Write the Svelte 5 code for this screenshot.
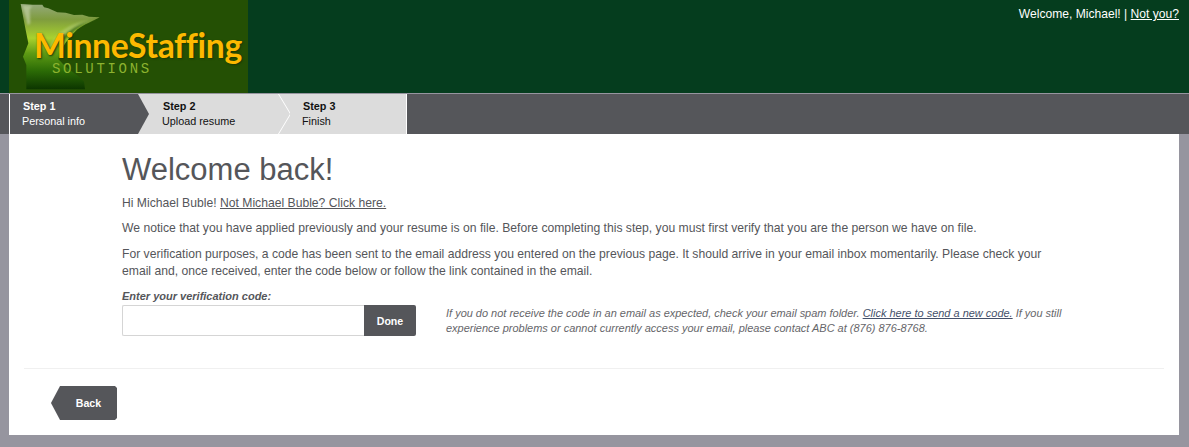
<script>
	const steps = [
		{ title: 'Step 1', label: 'Personal info', active: true },
		{ title: 'Step 2', label: 'Upload resume' },
		{ title: 'Step 3', label: 'Finish' }
	];
</script>

<div class="page">
	<header class="top">
		<div class="logo">
			<svg class="map" viewBox="0 0 717 279" width="239" height="93" aria-hidden="true">
				<defs>
					<linearGradient id="mn" x1="0" y1="0" x2="0" y2="1">
						<stop offset="0" stop-color="#94a97c" />
						<stop offset="0.18" stop-color="#7f9c3e" />
						<stop offset="0.4" stop-color="#a8d22e" />
						<stop offset="0.58" stop-color="#5d9a14" />
						<stop offset="0.78" stop-color="#2c6c06" />
						<stop offset="1" stop-color="#0c3500" />
					</linearGradient>
					<linearGradient id="dark" x1="0" y1="0" x2="0" y2="1">
						<stop offset="0" stop-color="#35660f" />
						<stop offset="1" stop-color="#1b5203" />
					</linearGradient>
					<filter id="soft" x="-10%" y="-10%" width="120%" height="120%"><feGaussianBlur stdDeviation="3" /></filter>
				</defs>
				<path fill="url(#mn)" d="M35 12 L70 14 L100 14 L105 22 L118 25 L145 37 L170 38 L195 45 L220 44 L240 50 L272 52 C240 68 215 78 198 95 C178 115 160 140 152 160 L148 178 L170 200 L210 230 L225 245 L228 268 L52 268 L52 195 L42 170 L58 130 L50 90 Z" />
				<path fill="url(#dark)" filter="url(#soft)" d="M272 52 C215 70 170 105 132 165 C155 130 150 120 165 105 C195 75 235 62 272 52 Z" opacity="0.85" />
				<path fill="#b7d07a" filter="url(#soft)" opacity="0.55" d="M150 130 C175 90 215 70 262 56 C225 62 185 72 160 92 C140 108 125 128 118 150 Z" />
				<path fill="#c9d6ae" filter="url(#soft)" opacity="0.6" d="M40 16 L70 18 L62 28 L64 70 L56 76 Z" />
			</svg>
			<div class="brand">MinneStaffing</div>
			<div class="sub">SOLUTIONS</div>
		</div>
		<div class="welcome">Welcome, Michael! | <a href="#top">Not you?</a></div>
	</header>

	<nav class="stepbar">
		<ol class="steps">
			{#each steps as s}
				<li class="step" class:active={s.active}>
					<b>{s.title}</b>
					<span>{s.label}</span>
				</li>
			{/each}
		</ol>
	</nav>

	<main class="content">
		<section class="copy">
			<h1>Welcome back!</h1>
			<p class="hi">Hi Michael Buble! <a href="#top">Not Michael Buble? Click here.</a></p>
			<p>We notice that you have applied previously and your resume is on file. Before completing this step, you must first verify that you are the person we have on file.</p>
			<p>For verification purposes, a code has been sent to the email address you entered on the previous page. It should arrive in your email inbox momentarily. Please check your email and, once received, enter the code below or follow the link contained in the email.</p>
			<div class="verify">
				<div class="field">
					<label for="code">Enter your verification code:</label>
					<div class="inputrow">
						<input id="code" type="text" />
						<button type="button">Done</button>
					</div>
				</div>
				<p class="help">If you do not receive the code in an email as expected, check your email spam folder. <a href="#top">Click here to send a new code.</a> If you still experience problems or cannot currently access your email, please contact ABC at (876) 876-8768.</p>
			</div>
		</section>
		<div class="actions">
			<button type="button" class="back">Back</button>
		</div>
	</main>
</div>

<style>
	:global(body) { margin: 0; background: #96959f; }
	.page { height: 447px; overflow: hidden; font-family: "Liberation Sans", Arial, sans-serif; font-size: 12.17px; color: #55565a; }

	.top { height: 93px; background: #053d1e; display: flex; justify-content: space-between; }
	.logo { position: relative; width: 239px; height: 93px; margin-left: 9px; background: #245004; overflow: hidden; }
	.map { position: absolute; left: 0; top: 0; }
	.brand { position: absolute; left: 25px; top: 27px; font-family: Lato, sans-serif; font-weight: 700; font-size: 33.7px; line-height: 36px; letter-spacing: -0.35px; color: #fdb900; text-shadow: 1px 1px 2px #1b3802; white-space: nowrap; }
	.sub { position: absolute; left: 43px; top: 63px; font-family: "Liberation Mono", monospace; font-size: 14px; line-height: 12px; letter-spacing: 2.7px; color: #8db32f; white-space: nowrap; }
	.welcome { padding: 7px 10px 0 0; color: #fff; font-size: 12.1px; }
	.welcome a { color: #fff; }

	.stepbar { height: 40px; margin-top: 1px; background: #55565a; padding-left: 9px; }
	.steps { list-style: none; margin: 0; padding: 0; display: flex; width: 398px; height: 40px; box-sizing: border-box; background: #dcdcdc; border-left: 1px solid #fff; border-right: 1px solid #fff; }
	.step { position: relative; width: 140px; box-sizing: border-box; padding: 5px 0 0 12px; line-height: 15px; font-size: 10.8px; color: #111; display: flex; flex-direction: column; }
	.step b { font-weight: 700; padding-left: 1px; }
	.step:last-child { width: 116px; }
	.step::after { content: ""; position: absolute; top: 0; left: 128px; width: 12px; height: 40px; background: #fff; clip-path: polygon(0 0, 100% 50%, 0 100%, 1px 100%, calc(100% + 1px) 50%, 1px 0); }
	.step:last-child::after { display: none; }
	.step.active { color: #fff; background: #55565a; clip-path: polygon(0 0, 128px 0, 139px 50%, 128px 100%, 0 100%); }
	.step.active::after { display: none; }

	.content { margin: 0 10px 0 9px; height: 301px; background: #fff; box-sizing: border-box; display: flex; flex-direction: column; }
	.copy { padding: 0 112px 0 113px; flex: 1; }
	h1 { margin: 0; padding-top: 17px; font-size: 31px; line-height: 38px; font-weight: 400; color: #55565a; }
	p { margin: 0; line-height: 17px; }
	.copy > p { margin-top: 9px; }
	.copy > p.hi { margin-top: 6px; margin-bottom: -1px; }
	a { color: #55565a; }
	.verify { display: flex; margin-top: 9px; gap: 30px; }
	.field { width: 294px; flex: none; }
	label { display: block; font-weight: 700; font-style: italic; font-size: 11px; line-height: 14px; margin-bottom: 2px; }
	.inputrow { display: flex; height: 31px; }
	input { flex: 1; min-width: 0; box-sizing: border-box; border: 1px solid #d5d5d5; border-right: 0; border-radius: 2px 0 0 2px; background: #fff; padding: 0 6px; }
	.inputrow button { width: 52px; border: 0; background: #55565a; color: #fff; font: 700 10.6px "Liberation Sans", Arial, sans-serif; border-radius: 0 2px 2px 0; }
	.help { margin-top: 17px; width: 625px; font-size: 10.98px; font-style: italic; line-height: 15px; color: #66666a; }
	.help a { color: #44506a; }
	.actions { margin: 0 15px; border-top: 1px solid #f0f0f0; height: 67px; box-sizing: border-box; padding: 17px 0 0 27px; }
	.back { width: 66px; height: 34px; border: 0; background: #55565a; color: #fff; font: 700 10.6px "Liberation Sans", Arial, sans-serif; clip-path: polygon(9px 0, calc(100% - 2px) 0, 100% 2px, 100% calc(100% - 2px), calc(100% - 2px) 100%, 9px 100%, 0 50%); padding: 0 0 0 9px; }
</style>
